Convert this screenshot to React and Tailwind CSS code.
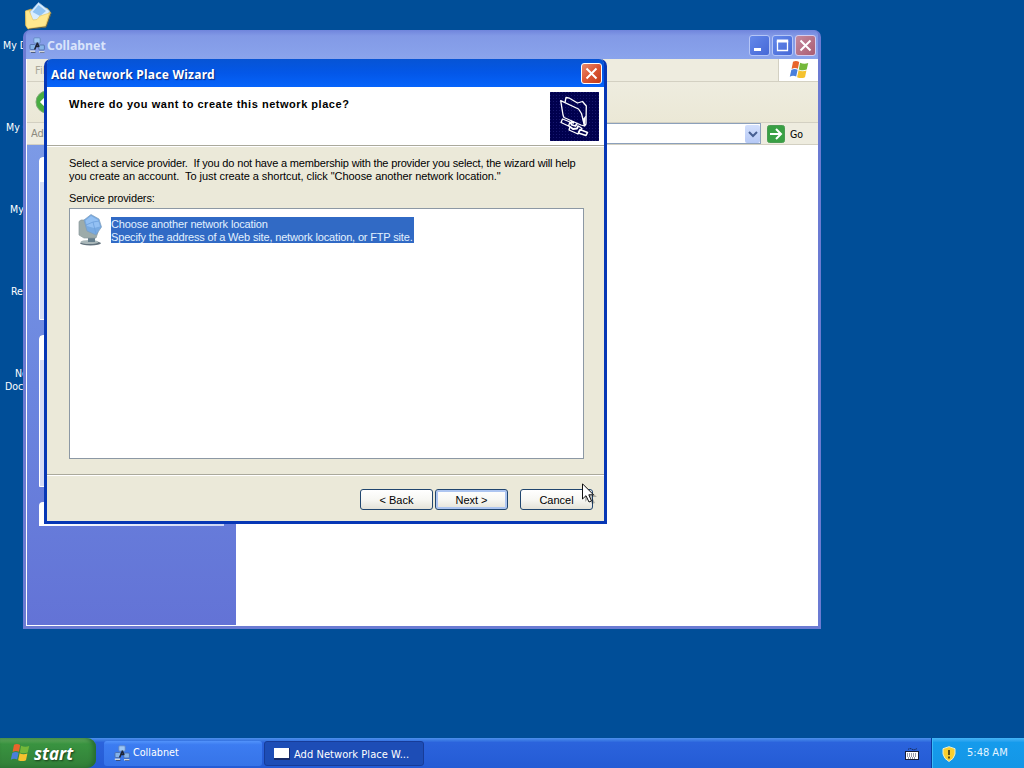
import React from "react";

function Flag({ className }) {
  return (
    <svg className={className} viewBox="0 0 20 20">
      <path d="M4 1.8Q7 .2 10.2 2L8.9 8.8Q5.8 7.3 2.6 9Z" fill="#e8652c" />
      <path d="M11.1 2.7Q15 4.5 19.2 3L17.7 9.6Q13.7 11.1 9.8 9.4Z" fill="#74b83a" />
      <path d="M2.3 9.9Q5.5 8.2 8.6 9.7L7.2 16.6Q4 15 .8 16.7Z" fill="#4a7fdb" />
      <path d="M9.6 10.3Q13.4 12 17.4 10.5L16 17.2Q12.2 19 8.1 17.2Z" fill="#f5c22e" />
    </svg>
  );
}

function NetIcon({ className }) {
  return (
    <svg className={className} viewBox="0 0 16 16">
      <rect x="4.8" y=".8" width="6.4" height="5.4" rx="1" fill="#9cc6f5" stroke="#5f83bd" strokeWidth=".8" />
      <rect x="1" y="7.5" width="5.6" height="5" rx="1" fill="#86b4ea" stroke="#4b6ba3" strokeWidth=".8" />
      <rect x="9.8" y="8" width="5.6" height="5" rx="1" fill="#86b4ea" stroke="#4b6ba3" strokeWidth=".8" />
      <path d="M8.6 5.5L5.6 12.5M8.4 6L10 10M6.8 9.6H9.6" stroke="#1d2333" strokeWidth="1.5" fill="none" />
      <path d="M.8 14.3H6M10 14.8H15.4" stroke="#d2d6dc" strokeWidth="1.5" />
      <path d="M2 15.5H6.5M11 15.8H15.5" stroke="#3a4050" strokeWidth=".7" />
    </svg>
  );
}

function FolderIcon() {
  return (
    <svg className="absolute left-6 top-0 h-[32px] w-[28px]" viewBox="0 0 28 32">
      <path d="M1.5 11L7 9L10 11L23 8L27 13L22 27L4 29L1.5 25Z" fill="#f0cc62" stroke="#c9a444" strokeWidth=".7" />
      <path d="M6 12L14.5 2.5L25.5 11L21 21L7 20Z" fill="#d8edff" stroke="#a5c6e6" strokeWidth=".7" />
      <path d="M8.5 12L14.5 5L22 11L16 16Z" fill="#8fc2f2" />
      <path d="M1.5 11L5 10.5L9 20L13 19.5L16 16L25.5 13L21.5 26L4 28.6L2 26Z" fill="#ffe88f" stroke="#e3c25f" strokeWidth=".6" />
      <path d="M5 29.2L22.3 26.8L26.8 13.5" stroke="#3f4d52" strokeWidth=".8" fill="none" />
    </svg>
  );
}

function MonitorIcon() {
  return (
    <svg className="h-[34px] w-[28px] shrink-0" viewBox="0 0 28 34">
      <ellipse cx="13.5" cy="30.3" rx="10.5" ry="2.2" fill="#61717c" />
      <ellipse cx="12.5" cy="29" rx="9" ry="2" fill="#a9b7b9" />
      <path d="M11 23H18V29H11Z" fill="#647d8b" />
      <path d="M2 8.5L4 7H10L21 19L19 25L7 25L2 22Z" fill="#9dabaa" stroke="#8b9a9e" strokeWidth=".7" />
      <path d="M7 7L14 1.5L22 6L24.5 14L19 22L10 18Z" fill="#78aae2" stroke="#7d9cba" strokeWidth=".7" />
      <path d="M8.5 7.5L14 3L21 7L23 13.5L17 15L10 13Z" fill="#93c0f3" />
      <path d="M9 12L16 9L22 8M16 9L19 21" stroke="#6c9fdc" strokeWidth=".8" fill="none" />
    </svg>
  );
}

function WizardIcon() {
  return (
    <svg className="h-[49px] w-[49px] shrink-0" viewBox="0 0 49 49">
      <defs>
        <pattern id="dots" width="3" height="3" patternUnits="userSpaceOnUse">
          <rect width="3" height="3" fill="#00004e" />
          <rect width="1" height="1" fill="#17176e" />
        </pattern>
      </defs>
      <rect width="49" height="49" fill="url(#dots)" />
      <g fill="none" stroke="#fff" strokeWidth="1.3" strokeLinejoin="round">
        <path d="M10.7 8.7L28.5 17L31.5 21.5L34.5 34L31 33L14 25.5L13 23Z" />
        <path d="M15 10.5L16 5.5L19.5 6.2L27.5 11L32.5 9.5L36.3 14L36 32L34.5 34" />
        <path d="M35.7 24L33 27L34.5 34Z" fill="#fff" strokeWidth=".5" />
        <path d="M12.5 27L20 30L18.5 34L11 30.5Z" />
        <path d="M20 30L22 33L25.5 34L27 31.5M19 34L23 37L27 36.5L28.5 33.5" strokeWidth="1.8" />
        <path d="M21 29.5L24 31" strokeWidth="2.2" />
        <path d="M20 35L19 38L28 42L29.5 38.5M28.5 34L32 36.5L30.5 39" />
        <path d="M30 37.5L37.5 40.5L36 43.5L28.5 41Z" strokeWidth="1.6" />
      </g>
    </svg>
  );
}

function WinButton({ kind, bright }) {
  const tone = bright
    ? "border-white bg-linear-to-br from-[#ea8a6c] via-[#db5634] to-[#c23b18]"
    : kind === "close"
      ? "border-[#d5cdf0] bg-linear-to-br from-[#c58a9f] to-[#a95c72]"
      : "border-[#b5c6f7] bg-linear-to-br from-[#6488ea] to-[#4668d6]";
  return (
    <div className={"h-[21px] w-[21px] rounded-[3px] border " + tone}>
      <svg className="h-[19px] w-[19px]" viewBox="0 0 19 19" fill="none" stroke="#fff" strokeWidth="2">
        {kind === "min" && <path d="M4 13.5H11" strokeWidth="3" />}
        {kind === "max" && <path d="M4.5 5V14.5H14.5V5" strokeWidth="1.3" />}
        {kind === "max" && <path d="M3.8 5H15.2" strokeWidth="3" />}
        {kind === "close" && <path d="M4.5 4.5L14.5 14.5M14.5 4.5L4.5 14.5" />}
      </svg>
    </div>
  );
}

function DesktopLabel({ className, children }) {
  return (
    <div className={"absolute overflow-hidden whitespace-pre font-['DejaVu_Sans_Condensed','DejaVu_Sans',sans-serif] text-[10.5px] leading-[13px] text-white " + className}>
      {children}
    </div>
  );
}

function ExplorerWindow() {
  return (
    <section className="absolute left-[23px] top-[30px] flex h-[599px] w-[798px] flex-col rounded-t-[7px] border-x-3 border-b-3 border-[#6b7bd3] bg-[#6b7bd3]">
      <header className="flex h-[29px] shrink-0 items-center rounded-t-[5px] bg-linear-to-b from-[#7085dc] via-[#8299e6] via-20% to-[#8aa4ec] pl-[3px] pr-[2px]">
        <NetIcon className="h-4 w-4" />
        <span className="ml-[2px] mt-[4px] flex-1 font-['Noto_Sans','Open_Sans',sans-serif] text-[12.3px] font-bold text-[#d9e4fb]">Collabnet</span>
        <div className="mt-[2px] flex gap-[2px]">
          <WinButton kind="min" />
          <WinButton kind="max" />
          <WinButton kind="close" />
        </div>
      </header>
      <div className="flex min-h-0 flex-1 flex-col border-b border-l border-white bg-white font-['DejaVu_Sans_Condensed','DejaVu_Sans',sans-serif] text-[11px]">
        <div className="flex h-[23px] shrink-0 items-stretch justify-between border-b border-[#d3d0c2] bg-[#eeecdf]">
          <span className="ml-2 w-[9px] overflow-hidden pt-[4px] text-[#aaa898]">File</span>
          <div className="flex w-[40px] items-center justify-center border-l border-[#d3d0c2] bg-white">
            <Flag className="h-[20px] w-[20px]" />
          </div>
        </div>
        <div className="flex h-[41px] shrink-0 items-center border-b border-[#d3d0c2] bg-linear-to-b from-[#eeecdf] to-[#ebe8d6] pl-2">
          <svg className="h-[24px] w-[24px]" viewBox="0 0 24 24">
            <circle cx="12" cy="12" r="11" fill="#49ad42" stroke="#80aa78" />
            <path d="M14 5L7 12L14 19M7 12H19" fill="none" stroke="#fff" strokeWidth="3" />
          </svg>
        </div>
        <div className="flex h-[22px] shrink-0 items-center border-b border-[#d3d0c2] bg-[#eeecdf] pl-[4px]">
          <span className="mr-[37px] mt-[2px] w-[13px] overflow-hidden text-[#8c8a7e]">Address</span>
          <div className="flex h-[21px] w-[680px] items-center justify-end border border-[#8ca0bb] bg-white">
            <div className="flex h-[18px] w-[15px] items-center justify-center rounded-[2px] bg-linear-to-b from-[#d3e0fd] to-[#b6c9f5]">
              <svg className="h-[8px] w-[10px]" viewBox="0 0 10 8"><path d="M1 2L5 6L9 2" fill="none" stroke="#475f92" strokeWidth="2" /></svg>
            </div>
          </div>
          <svg className="ml-[6px] h-[18px] w-[18px]" viewBox="0 0 18 18">
            <rect x=".5" y=".5" width="17" height="17" rx="2" fill="#39a044" stroke="#4b9c54" />
            <path d="M3 9H14M9 4L14 9L9 14" fill="none" stroke="#fff" strokeWidth="2" />
          </svg>
          <span className="ml-[5px] mt-[2px] text-[10.5px] text-black">Go</span>
        </div>
        <div className="flex min-h-0 flex-1">
          <aside className="flex w-[209px] flex-col bg-linear-to-b from-[#7c9ae6] via-[#6b86df] to-[#6373d6] px-[12px] pt-3">
            <div className="h-[163px] rounded-t-[4px] border border-white bg-[#d6dff7]"><div className="h-[24px] bg-white" /></div>
            <div className="mt-[15px] h-[152px] rounded-t-[4px] border border-white bg-[#d6dcf6]"><div className="h-[24px] bg-white" /></div>
            <div className="mt-[15px] h-[24px] rounded-t-[4px] bg-linear-to-r from-white to-[#ccd5f5]" />
          </aside>
          <main className="flex-1 bg-white" />
        </div>
      </div>
    </section>
  );
}

function WizardButton({ children, primary, className }) {
  return (
    <button className={"h-[21px] w-[73px] rounded-[3px] border border-[#21466f] bg-linear-to-b from-white via-[#f7f7f3] to-[#e4e2d8] text-center text-[11px] leading-[20px] " + (primary ? "shadow-[inset_0_0_0_2px_#adc5f0] " : "") + (className || "")}>
      {children}
    </button>
  );
}

function Wizard() {
  return (
    <section className="absolute left-[44px] top-[59px] flex h-[465px] w-[563px] flex-col rounded-t-[7px] border-x-3 border-b-3 border-[#0737b5] bg-[#ebe9d9] font-['Liberation_Sans',Arial,sans-serif] text-[11px] text-black">
      <header className="flex h-[28px] shrink-0 items-center justify-between rounded-t-[5px] bg-linear-to-b from-[#0754d4] via-[#0357e8] to-[#0664fb] pl-[4px] pr-[2px]">
        <span className="mt-[3px] font-['Noto_Sans','Open_Sans',sans-serif] text-[12px] font-bold tracking-[0.24px] text-white [text-shadow:1px_1px_1px_#082b87]">Add Network Place Wizard</span>
        <div className="mt-px"><WinButton kind="close" bright /></div>
      </header>
      <div className="flex h-[59px] shrink-0 justify-between border-b border-[#aaa99c] bg-white pl-[22px] pr-[5px] pt-[5px]">
        <h1 className="whitespace-nowrap pt-[5px] text-[11px] font-bold leading-[15px] tracking-[0.53px]">Where do you want to create this network place?</h1>
        <WizardIcon />
      </div>
      <div className="flex flex-1 flex-col border-t border-white pl-[22px] pr-[20px] pt-[10px]">
        <p className="whitespace-pre leading-[13px]">
          <span className="block tracking-[-0.16px]">Select a service provider.  If you do not have a membership with the provider you select, the wizard will help</span>
          <span className="block tracking-[-0.05px]">you create an account.  To just create a shortcut, click "Choose another network location."</span>
        </p>
        <p className="mt-[9px] leading-[13px] tracking-[-0.13px]">Service providers:</p>
        <div className="mt-[3px] flex h-[251px] w-[515px] items-start border border-[#8c98a4] bg-white pl-[7px] pt-[4px]">
          <MonitorIcon />
          <div className="ml-[6px] mt-[4px] h-[26px] w-[303px] whitespace-nowrap bg-[#316ac5] pt-px leading-[13px] text-[#e2f1ff]">
            <div className="tracking-[-0.13px]">Choose another network location</div>
            <div className="tracking-[-0.16px]">Specify the address of a Web site, network location, or FTP site.</div>
          </div>
        </div>
      </div>
      <footer className="flex h-[47px] shrink-0 items-start justify-end border-t border-[#aaa99c] pr-[11px] pt-[14px] shadow-[inset_0_1px_0_#fff]">
        <WizardButton>&lt; Back</WizardButton>
        <WizardButton primary className="ml-[2px]">Next &gt;</WizardButton>
        <WizardButton className="ml-[12px]">Cancel</WizardButton>
      </footer>
    </section>
  );
}

function Taskbar() {
  return (
    <footer className="absolute bottom-0 left-0 flex h-[30px] w-[1024px] items-stretch bg-linear-to-b from-[#4d91ec] via-[#2b63dc] via-15% to-[#245bd5] font-['DejaVu_Sans_Condensed','DejaVu_Sans',sans-serif] text-[11px] text-white">
      <div className="flex w-[96px] items-center rounded-r-[9px] bg-linear-to-b from-[#66ae63] via-[#399340] via-20% to-[#327f38] pl-[10px] shadow-[inset_-3px_0_4px_#276c31]">
        <Flag className="h-[20px] w-[20px]" />
        <span className="ml-[4px] mt-px font-['Open_Sans','Noto_Sans',sans-serif] text-[17px] font-bold italic leading-[20px] [text-shadow:1px_1px_2px_#173b19]">start</span>
      </div>
      <div className="ml-[8px] mt-[3px] flex h-[25px] w-[158px] items-center rounded-[3px] bg-linear-to-b from-[#5293fb] via-[#3c7cf1] via-15% to-[#3674e8] pl-[10px]">
        <NetIcon className="-mt-px h-4 w-4" />
        <span className="ml-[3px] text-[10.7px]">Collabnet</span>
      </div>
      <div className="ml-[2px] mt-[3px] flex h-[25px] w-[160px] items-center rounded-[3px] border border-[#173c98] bg-[#1d4db6] pl-[9px]">
        <div className="h-[12px] w-[16px] border-b-2 border-r border-[#172b68] bg-white" />
        <span className="ml-[4px] mt-[3px] whitespace-nowrap tracking-[0.05px]">Add Network Place W...</span>
      </div>
      <div className="flex flex-1 items-center justify-end pr-[12px]">
        <svg className="mt-[2px] h-[14px] w-[14px]" viewBox="0 0 14 14">
          <path d="M3 2.5Q5 .8 7 2.2T12 1.5" stroke="#172545" fill="none" strokeDasharray="1.5 .7" />
          <rect x=".5" y="4.5" width="13" height="8" fill="#fff" stroke="#151d37" />
          <path d="M2 7H12M2 9H12M3 11H11" stroke="#313a58" strokeDasharray="1 1" />
        </svg>
      </div>
      <div className="flex w-[93px] items-center border-l border-[#0b3b9e] bg-linear-to-b from-[#45b5f7] via-[#159bec] via-15% to-[#1496e6] pl-[10px] shadow-[inset_1px_0_#3bbcf7]">
        <svg className="mt-px h-[16px] w-[14px]" viewBox="0 0 14 16">
          <path d="M7 .7L13 2.7V8Q12 13 7 15.5Q2 13 1 8V2.7Z" fill="#f9cf2e" stroke="#e7efcf" />
          <path d="M7 4V9M7 10.5V12.5" stroke="#403914" strokeWidth="1.7" />
        </svg>
        <span className="ml-[11px] mt-px whitespace-nowrap text-[#e4f5ff]">5:48 AM</span>
      </div>
    </footer>
  );
}

export default function App() {
  return (
    <div className="relative h-[768px] w-[1024px] overflow-hidden bg-[#004e98]">
      <FolderIcon />
      <DesktopLabel className="left-[3px] top-[39px] w-[20px]">My Documents</DesktopLabel>
      <DesktopLabel className="left-[6px] top-[121px] w-[17px]">My Computer</DesktopLabel>
      <DesktopLabel className="left-[10px] top-[203px] w-[13px]">My Network</DesktopLabel>
      <DesktopLabel className="left-[11px] top-[285px] w-[12px]">Recycle Bin</DesktopLabel>
      <DesktopLabel className="left-[15px] top-[367px] w-[8px]">New</DesktopLabel>
      <DesktopLabel className="left-[5px] top-[380px] w-[18px]">Document</DesktopLabel>
      <ExplorerWindow />
      <Wizard />
      <Taskbar />
      <svg className="absolute left-[582px] top-[483px] h-[22px] w-[15px]" viewBox="0 0 15 22">
        <path d="M3 3V19L7 15L10 21L13 20L10 14H15Z" fill="#000" opacity=".25" />
        <path d="M.5 .8V16L4 12.7L7 19L9.5 18L6.8 11.8H11.5Z" fill="#fff" stroke="#111" />
      </svg>
    </div>
  );
}
